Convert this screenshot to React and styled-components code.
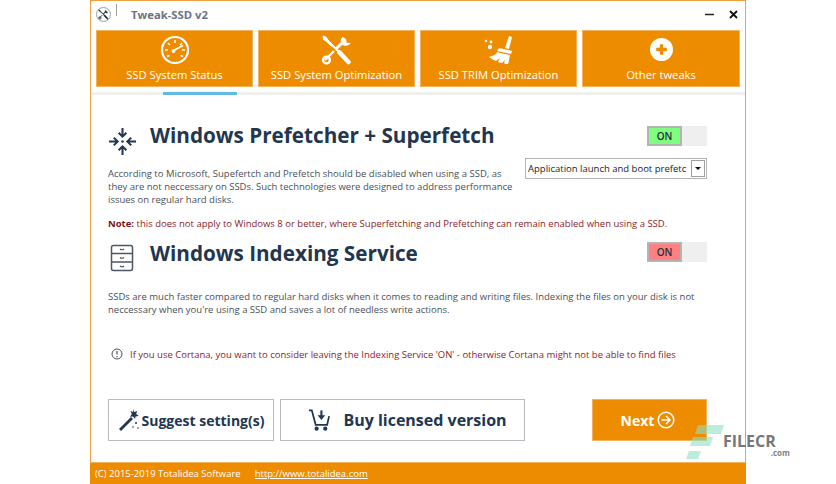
import styled, { createGlobalStyle } from 'styled-components';

const orange = '#ee8c00';
const navy = '#22364f';

const GlobalStyle = createGlobalStyle`
  html, body {
    margin: 0;
    background: #ffffff;
    font-family: "Open Sans", "Noto Sans", sans-serif;
  }
`;

const Page = styled.div`
  position: relative;
  width: 836px;
  height: 484px;
  overflow: hidden;
  padding-left: 90px;
  box-sizing: border-box;
`;

const Window = styled.div`
  box-sizing: border-box;
  width: 656px;
  height: 484px;
  border: 1px solid #f0a040;
  border-bottom: 0;
  display: flex;
  flex-direction: column;
  background: #fff;
`;

const TitleBar = styled.div`
  box-sizing: border-box;
  height: 29px;
  display: flex;
  align-items: center;
  padding: 0 0 3px 5px;
`;

const AppBadge = styled.div`
  box-sizing: border-box;
  width: 15px;
  height: 15px;
  margin-right: 5px;
  border-radius: 50%;
  border: 1px solid #9aa0a8;
  display: flex;
  align-items: center;
  justify-content: center;
`;

const TitleRule = styled.div`
  width: 1px;
  height: 12px;
  margin-top: -8px;
  background: #a0a0a0;
`;

const TitleText = styled.div`
  margin-left: 14px;
  font-size: 11.3px;
  font-weight: 700;
  color: #6c7480;
  flex: 1;
`;

const WinButton = styled.button`
  width: 24px;
  height: 20px;
  padding: 0;
  border: 0;
  background: none;
  display: flex;
  align-items: center;
  justify-content: center;
`;

const Tabs = styled.div`
  display: grid;
  grid-template-columns: 157px 157px 157px 158px;
  gap: 5px;
  padding-left: 5px;
`;

const Tab = styled.div`
  box-sizing: border-box;
  height: 57px;
  background: ${orange};
  border: 1px solid #f4b25a;
  color: #fff;
  font-size: 11.2px;
  display: flex;
  flex-direction: column;
  align-items: center;
  padding: 2px 0 4px;
  justify-content: space-between;
`;

const IconSlot = styled.div`
  height: 33px;
  display: flex;
  align-items: center;
  justify-content: center;
`;

const Strip = styled.div`
  height: 3px;
  margin: 5px 0 0 1px;
  background: #f0f0f0;
  padding-left: 71px;
`;

const StripActive = styled.div`
  width: 74px;
  height: 3px;
  background: #62bbe0;
`;

const Content = styled.div`
  flex: 1;
  padding: 0 38px 0 17px;
  display: flex;
  flex-direction: column;
`;

const HeadRow = styled.div`
  display: flex;
  align-items: center;
  height: 22px;
  margin-top: ${(p) => p.$top}px;
`;

const HeadIcon = styled.div`
  width: 42px;
  box-sizing: border-box;
  display: flex;
  align-items: center;
  padding-left: ${(p) => p.$left}px;
  padding-top: ${(p) => p.$drop}px;
`;

const Heading = styled.h2`
  flex: 1;
  margin: 0 0 2px;
  font-size: 20.7px;
  font-weight: 700;
  color: ${navy};
`;

const Toggle = styled.div`
  width: 60px;
  height: 20px;
  margin-bottom: ${(p) => p.$lift || 0}px;
  background: #efefef;
`;

const ToggleOn = styled.div`
  box-sizing: border-box;
  width: 35px;
  height: 20px;
  border: 2px solid #b4b4b4;
  background: ${(p) => p.$color};
  font-size: 10px;
  font-weight: 600;
  line-height: 16px;
  text-align: center;
  color: #24303c;
`;

const BodyRow = styled.div`
  display: flex;
  justify-content: space-between;
  align-items: flex-start;
`;

const Para = styled.p`
  margin: ${(p) => p.$top}px 0 0;
  width: ${(p) => p.$w}px;
  font-size: 9.5px;
  line-height: 13px;
  color: #4a5058;
`;

const Select = styled.div`
  box-sizing: border-box;
  width: 182px;
  height: 21px;
  margin-top: 11px;
  border: 1px solid #b0b4b8;
  display: flex;
  align-items: center;
  justify-content: space-between;
  padding: 0 1px 0 2px;
  font-size: 9.5px;
  color: #1c1c1c;
`;

const SelectArrow = styled.div`
  box-sizing: border-box;
  width: 14px;
  height: 17px;
  border: 1px solid #a0a0a0;
  display: flex;
  align-items: center;
  justify-content: center;
  &::after {
    content: '';
    border-left: 3px solid transparent;
    border-right: 3px solid transparent;
    border-top: 3px solid #111;
  }
`;

const Note = styled.div`
  margin-top: 11px;
  font-size: 9.5px;
  line-height: 13px;
  color: #8a1c2c;
  white-space: nowrap;
`;

const NoteLabel = styled.b`
  color: #7a1420;
`;

const Hint = styled.div`
  margin-top: 31px;
  padding-left: 3px;
  display: flex;
  align-items: center;
  gap: 7px;
  height: 14px;
  font-size: 9.5px;
  color: #8a1c2c;
  white-space: nowrap;
`;

const Actions = styled.div`
  margin-top: 38px;
  display: flex;
  height: 42px;
`;

const Outline = styled.button`
  box-sizing: border-box;
  width: ${(p) => p.$w}px;
  height: 42px;
  margin-right: ${(p) => p.$gap}px;
  padding: 0 0 0 ${(p) => p.$pad}px;
  border: 1px solid #b8bcc0;
  background: #fff;
  color: ${navy};
  font-family: inherit;
  font-weight: 700;
  font-size: ${(p) => p.$size}px;
  display: flex;
  align-items: center;
  justify-content: center;
  gap: ${(p) => p.$iconGap}px;
`;

const NextButton = styled.button`
  box-sizing: border-box;
  width: 115px;
  height: 42px;
  margin-left: auto;
  padding: 0 3px 0 0;
  border: 1px solid #f4b25a;
  background: ${orange};
  color: #fff;
  font-family: inherit;
  font-weight: 700;
  font-size: 14px;
  display: flex;
  align-items: center;
  justify-content: center;
  gap: 3px;
`;

const Footer = styled.div`
  box-sizing: border-box;
  height: 22px;
  margin: 0 -1px;
  padding-left: 5px;
  background: ${orange};
  border-top: 1px solid #f4b25a;
  color: #fff;
  font-size: 9.5px;
  display: flex;
  align-items: center;
  gap: 14px;
`;

const FooterLink = styled.a`
  color: #fff;
  text-decoration: underline;
`;

const Watermark = styled.div`
  position: absolute;
  left: 686px;
  top: 425px;
  display: flex;
  pointer-events: none;
`;

const MarkText = styled.div`
  margin: 9px 0 0 -1px;
  font-size: 16px;
  line-height: 15px;
  font-weight: 700;
  color: #75777a;
  display: flex;
  flex-direction: column;
  align-items: flex-end;
`;

const MarkDomain = styled.span`
  font-size: 8px;
  line-height: 8px;
  margin-right: -14px;
  color: #808285;
`;

const Gauge = () => (
  <svg width="30" height="30" viewBox="0 0 30 30" fill="none" stroke="#fff">
    <circle cx="15" cy="15" r="13" strokeWidth="2.2" />
    <path d="M15 5v3M7.9 7.9l2 2M22.1 7.9l-2 2M5 15h3M25 15h-3M7 21.5l2.5-1M23 21.5l-2.5-1" strokeWidth="1.4" />
    <path d="M13.5 15.5L23 10.5" strokeWidth="1.6" />
    <circle cx="13.5" cy="16" r="2" fill="#fff" stroke="none" />
  </svg>
);

const Tools = ({ size = 32, color = '#fff' }) => (
  <svg width={size} height={size} viewBox="0 0 32 32" fill="none" stroke={color} strokeWidth="2.6">
    <path d="M2 2l3 1 2 3 5 5 -1.5 1.5 -5-5-3-2z" fill={color} strokeWidth="1" />
    <path d="M11 11l8 8" strokeWidth="2" />
    <path d="M18.5 18.5l9 9.5" strokeWidth="4.5" strokeLinecap="round" />
    <path d="M4 26l9-9" strokeWidth="2.4" />
    <circle cx="5.5" cy="26" r="3.4" strokeWidth="2.4" />
    <path d="M15 15l7-7" strokeWidth="3" />
    <path d="M22 3.5a5 5 0 0 0-.5 6.5 5 5 0 0 0 7-.5l-3.5-.5-.5-3.5z" fill={color} strokeWidth="1.2" />
  </svg>
);

const Broom = () => (
  <svg width="30" height="30" viewBox="0 0 30 30" fill="#fff">
    <path d="M25 1l3 1-3 12-4-1z" />
    <path d="M15 13l13 3-1 3-14-3z" />
    <path d="M13 17c3 1 8 2 13 3-1 4-1 7-2 9-2 0-3 0-4-1l1-3-3 3c-2 0-3-1-4-1l2-4-4 3c-2-1-5-2-7-4 3-1 7-2 8-5z" />
    <circle cx="2" cy="6" r="1.2" />
    <circle cx="7" cy="7" r="1.4" />
    <circle cx="6" cy="12" r="2.2" />
  </svg>
);

const PlusCircle = () => (
  <svg width="23" height="23" viewBox="0 0 24 24">
    <circle cx="12" cy="12" r="12" fill="#fff" />
    <path d="M12 6.5v11M6.5 12h11" stroke={orange} strokeWidth="3.4" />
  </svg>
);

const Collapse = () => (
  <svg width="29" height="29" viewBox="0 0 30 30" fill="none" stroke={navy} strokeWidth="2.1">
    <path d="M15 1v9M11 6l4 4 4-4" />
    <path d="M15 29v-9M11 24l4-4 4 4" />
    <path d="M1 15h9M6 11l4 4-4 4" />
    <path d="M29 15h-9M24 11l-4 4 4 4" />
    <circle cx="15" cy="15" r="1.3" fill={navy} stroke="none" />
  </svg>
);

const Cabinet = () => (
  <svg width="24" height="28" viewBox="0 0 24 28" fill="none" stroke="#4c5866" strokeWidth="1.5">
    <rect x="1.5" y="1.5" width="21" height="25" rx="2" />
    <path d="M2 9.5h20M2 18h20" />
    <path d="M10 5c1 1 3 1 4 0M10 13.5c1 1 3 1 4 0M10 22c1 1 3 1 4 0" strokeWidth="1.2" />
  </svg>
);

const Info = () => (
  <svg width="12" height="12" viewBox="0 0 12 12" fill="none" stroke="#4a5058">
    <circle cx="6" cy="6" r="5" />
    <path d="M6 3v3.6M6 8v1.2" strokeWidth="1.2" />
  </svg>
);

const Wand = () => (
  <svg width="22" height="24" viewBox="0 0 22 24" fill={navy}>
    <path d="M1 21l12-12 2 2-12 12z" />
    <path d="M15 1l1.2 3 3-1-1 3 2.6 2-3.2.5L17 11l-2-2.5-3 .2 1.8-2.6L12.5 3l2.6 1z" />
    <circle cx="18" cy="15" r="1" />
    <circle cx="15" cy="19" r=".8" />
    <circle cx="20" cy="20" r=".8" />
  </svg>
);

const Cart = () => (
  <svg width="23" height="24" viewBox="0 0 24 24" fill="none" stroke={navy} strokeWidth="1.8">
    <path d="M1 2h3l4 15h12l2-9" />
    <circle cx="9" cy="21" r="1.3" fill={navy} />
    <circle cx="18" cy="21" r="1.3" fill={navy} />
    <path d="M14 2v7" strokeWidth="2.2" />
    <path d="M10 7h8l-4 5z" fill={navy} stroke="none" />
  </svg>
);

const ArrowCircle = () => (
  <svg width="18" height="18" viewBox="0 0 18 18" fill="none" stroke="#fff" strokeWidth="1.5">
    <circle cx="9" cy="9" r="7.8" />
    <path d="M4.5 9h8M9 5l4 4-4 4" />
  </svg>
);

const MarkLogo = () => (
  <svg width="38" height="34" viewBox="0 0 38 34" fill="#8fe0c4" fillOpacity="0.6">
    <path d="M12 0h26l-3 9H9z" />
    <path d="M7 12h20l-3 9H4z" />
    <path d="M3 26h12l-3 8H0z" />
  </svg>
);

const tabs = [
  { label: 'SSD System Status', icon: <Gauge /> },
  { label: 'SSD System Optimization', icon: <Tools /> },
  { label: 'SSD TRIM Optimization', icon: <Broom /> },
  { label: 'Other tweaks', icon: <PlusCircle /> },
];

export default function App() {
  return (
    <Page>
      <GlobalStyle />
      <Window>
        <TitleBar>
          <AppBadge>
            <Tools size={11} color="#26303c" />
          </AppBadge>
          <TitleRule />
          <TitleText>Tweak-SSD v2</TitleText>
          <WinButton>
            <svg width="9" height="9" viewBox="0 0 9 9"><path d="M0 4.5h9" stroke="#222" strokeWidth="1.5" /></svg>
          </WinButton>
          <WinButton>
            <svg width="9" height="9" viewBox="0 0 9 9"><path d="M1 1l7 7M8 1l-7 7" stroke="#111" strokeWidth="1.8" /></svg>
          </WinButton>
        </TitleBar>
        <Tabs>
          {tabs.map((t) => (
            <Tab key={t.label}>
              <IconSlot>{t.icon}</IconSlot>
              {t.label}
            </Tab>
          ))}
        </Tabs>
        <Strip>
          <StripActive />
        </Strip>
        <Content>
          <HeadRow $top={30}>
            <HeadIcon $left={0} $drop={10}><Collapse /></HeadIcon>
            <Heading>Windows Prefetcher + Superfetch</Heading>
            <Toggle><ToggleOn $color="#7fff7f">ON</ToggleOn></Toggle>
          </HeadRow>
          <BodyRow>
            <Para $top={20} $w={405}>
              According to Microsoft, Supefertch and Prefetch should be disabled when using a SSD, as
              they are not neccessary on SSDs. Such technologies were designed to address performance
              issues on regular hard disks.
            </Para>
            <Select>
              <span>Application launch and boot prefetc</span>
              <SelectArrow />
            </Select>
          </BodyRow>
          <Note>
            <NoteLabel>Note:</NoteLabel> this does not apply to Windows 8 or better, where Superfetching and Prefetching can remain enabled when using a SSD.
          </Note>
          <HeadRow $top={13}>
            <HeadIcon $left={2} $drop={8}><Cabinet /></HeadIcon>
            <Heading>Windows Indexing Service</Heading>
            <Toggle $lift={4}><ToggleOn $color="#ff8080">ON</ToggleOn></Toggle>
          </HeadRow>
          <Para $top={25} $w={600}>
            SSDs are much faster compared to regular hard disks when it comes to reading and writing files. Indexing the files on your disk is not
            neccessary when you're using a SSD and saves a lot of needless write actions.
          </Para>
          <Hint>
            <Info />
            If you use Cortana, you want to consider leaving the Indexing Service 'ON' - otherwise Cortana might not be able to find files
          </Hint>
          <Actions>
            <Outline $w={166} $gap={6} $size={14} $iconGap={2} $pad={0}><Wand />Suggest setting(s)</Outline>
            <Outline $w={245} $gap={0} $size={16} $iconGap={12} $pad={10}><Cart />Buy licensed version</Outline>
            <NextButton>Next<ArrowCircle /></NextButton>
          </Actions>
        </Content>
        <Footer>
          <span>(C) 2015-2019 Totalidea Software</span>
          <FooterLink href="#">http://www.totalidea.com</FooterLink>
        </Footer>
      </Window>
      <Watermark>
        <MarkLogo />
        <MarkText>
          FILECR
          <MarkDomain>.com</MarkDomain>
        </MarkText>
      </Watermark>
    </Page>
  );
}
